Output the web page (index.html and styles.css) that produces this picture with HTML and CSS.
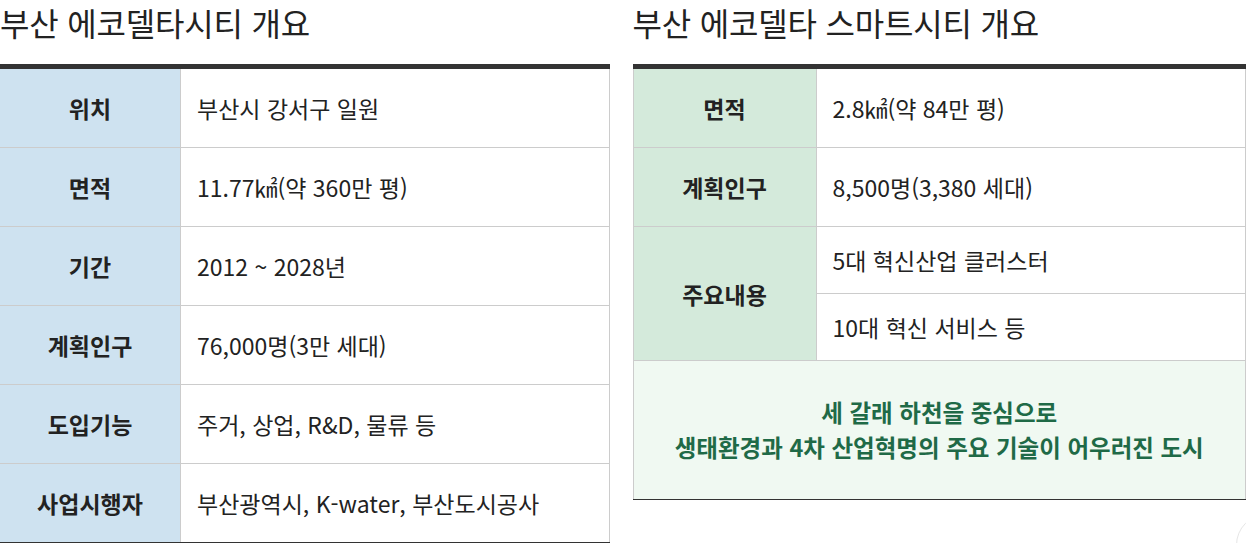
FILE: index.html
```html
<!DOCTYPE html>
<html lang="ko">
<head>
<meta charset="utf-8">
<link rel="stylesheet" href="styles.css">
</head>
<body>
<div class="page">
  <section class="col col-left">
    <h2 class="title">부산 에코델타시티 개요</h2>
    <table class="info info-blue">
      <tr><th>위치</th><td>부산시 강서구 일원</td></tr>
      <tr><th>면적</th><td>11.77㎢(약 360만 평)</td></tr>
      <tr><th>기간</th><td>2012 ~ 2028년</td></tr>
      <tr><th>계획인구</th><td>76,000명(3만 세대)</td></tr>
      <tr><th>도입기능</th><td>주거, 상업, R&amp;D, 물류 등</td></tr>
      <tr><th>사업시행자</th><td>부산광역시, K-water, 부산도시공사</td></tr>
    </table>
  </section>
  <section class="col col-right">
    <h2 class="title">부산 에코델타 스마트시티 개요</h2>
    <table class="info info-green">
      <tr><th>면적</th><td>2.8㎢(약 84만 평)</td></tr>
      <tr><th>계획인구</th><td>8,500명(3,380 세대)</td></tr>
      <tr><th rowspan="2">주요내용</th><td class="sub">5대 혁신산업 클러스터</td></tr>
      <tr><td class="sub">10대 혁신 서비스 등</td></tr>
      <tr><td colspan="2" class="vision">세 갈래 하천을 중심으로<br>생태환경과 4차 산업혁명의 주요 기술이 어우러진 도시</td></tr>
    </table>
  </section>
</div>
<div class="float-btn"></div>
</body>
</html>
```
FILE: styles.css
```css
html, body {
  margin: 0;
  padding: 0;
  background: #ffffff;
  overflow: hidden;
}
body {
  font-family: "Noto Sans CJK KR", "Noto Sans", sans-serif;
  color: #222222;
}
.page {
  display: flex;
  gap: 23px;
  align-items: flex-start;
}
.col-left { width: 610px; }
.col-right { width: 614px; }
.title {
  margin: 0;
  height: 64px;
  font-size: 32px;
  font-weight: 400;
  line-height: 44px;
  color: #222222;
  letter-spacing: -0.2px;
  white-space: nowrap;
}
.info {
  width: 100%;
  border-collapse: collapse;
  border-top: 5px solid #333333;
  table-layout: fixed;
}
.info th, .info td {
  border: 1px solid #cccccc;
  height: 78px;
  padding: 0;
  vertical-align: middle;
  font-size: 23px;
}
.info th {
  font-weight: 700;
  text-align: center;
  color: #222222;
}
.info td {
  padding-left: 16px;
  font-weight: 400;
  color: #222222;
}
.info-blue th { width: 180px; background: #cee2f0; border-left: none; }
.info-blue tr:last-child th, .info-blue tr:last-child td { border-bottom: 2px solid #333333; }
.info-green th { width: 182px; background: #d4eadb; }
.info-green td.sub { height: 66px; }
.info-green td.vision {
  height: 138px;
  padding: 0;
  text-align: center;
  background: #f0f9f2;
  color: #1f6a47;
  font-weight: 700;
  font-size: 23.5px;
  line-height: 35px;
  border-bottom: 1px solid #333333;
}
.float-btn {
  position: absolute;
  left: 1236px;
  top: 514px;
  width: 60px;
  height: 60px;
  border-radius: 50%;
  border: 1px solid #e6e6e6;
  background: #ffffff;
}
```
